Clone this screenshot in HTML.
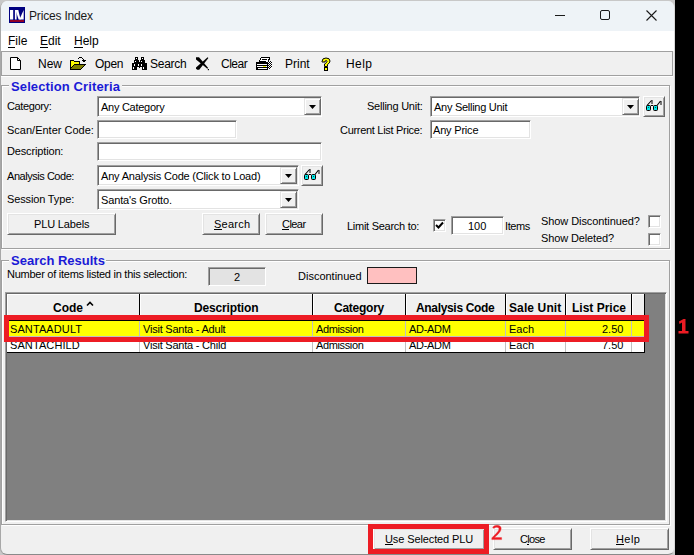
<!DOCTYPE html>
<html><head><meta charset="utf-8">
<style>
*{margin:0;padding:0;box-sizing:border-box}
html,body{width:694px;height:555px;overflow:hidden;background:#000}
body{position:relative;font-family:"Liberation Sans",sans-serif;font-size:11px;color:#000}
.a{position:absolute}
.t{position:absolute;white-space:nowrap;line-height:1;font-size:11px}
.s{position:absolute;white-space:nowrap;line-height:1;font-size:12px;color:#000}
.sunk{position:absolute;background:#fff;border-style:solid;border-width:1px;border-color:#a0a0a0 #fff #fff #a0a0a0;box-shadow:inset 1px 1px 0 #696969,inset -1px -1px 0 #e3e3e3}
.btn{position:absolute;background:#f0f0f0;border-style:solid;border-width:1px;border-color:#fff #696969 #696969 #fff;box-shadow:inset 1px 1px 0 #e3e3e3,inset -1px -1px 0 #a0a0a0}
.dd{position:absolute;width:17px;background:#f0f0f0;border-style:solid;border-width:1px;border-color:#e3e3e3 #696969 #696969 #e3e3e3;box-shadow:inset 1px 1px 0 #fff,inset -1px -1px 0 #a0a0a0}
.dd:after{content:"";position:absolute;left:4px;top:6px;width:7px;height:4px;background:#000;clip-path:polygon(0 0,100% 0,50% 100%)}
.gt{position:absolute;font-weight:bold;color:#1a1ad6;font-size:13px;line-height:1;white-space:nowrap}
.hl{position:absolute;height:1px;background:#a0a0a0;box-shadow:0 1px 0 #fff}
.vl{position:absolute;width:1px;background:#a0a0a0;box-shadow:1px 0 0 #fff}
u{text-decoration:none;position:relative}
u:after{content:"";position:absolute;left:0;right:0;bottom:0;height:1px;background:#000}
.hdr{position:absolute;top:294px;height:27px;background:#f0f0f0;border-right:1px solid #000;border-bottom:1px solid #000;box-shadow:inset 1px 1px 0 #fff}
.ht{position:absolute;top:302px;font-weight:bold;font-size:12px;line-height:1;white-space:nowrap}
.vg{position:absolute;width:1px;background:#c0c0c0}
.red{position:absolute;border:5px solid #ed1c24}
</style></head><body>
<!-- desktop behind -->
<div class="a" style="left:0;top:0;width:675px;height:555px;background:#c8c8c8"></div>
<!-- window -->
<div class="a" style="left:0;top:1px;width:675px;height:554px;background:#f0f0f0;border-radius:7px;overflow:hidden;border-left:1px solid #a8a8a8;border-right:1px solid #d8d8d8;border-bottom:1px solid #8a8a8a">
  <div class="a" style="left:0;top:0;width:675px;height:30px;background:#eef3f7"></div>
  <div class="a" style="left:0;top:30px;width:675px;height:20px;background:#fff"></div>
</div>

<!-- title bar -->
<svg class="a" style="left:9px;top:7px" width="16" height="16" viewBox="0 0 16 16">
  <rect width="16" height="16" fill="#000080"/>
  <rect x="1" y="3" width="3.2" height="9.5" fill="#fff"/>
  <path d="M5.9 3H7.6V12.5H5.9Z" fill="#fff"/>
  <path d="M6.5 3H9.3L11.6 12.5H9.6Z" fill="#fff"/>
  <path d="M14.7 3V12.5H10.4Z" fill="#fff"/>
  <rect x="1" y="13" width="14" height="2" fill="#900028"/>
</svg>
<div class="s" style="left:29px;top:10px;color:#1a1a1a;letter-spacing:-0.18px">Prices Index</div>
<div class="a" style="left:555px;top:15px;width:10px;height:1px;background:#1a1a1a"></div>
<div class="a" style="left:600px;top:10px;width:10px;height:10px;border:1px solid #1a1a1a;border-radius:2px"></div>
<svg class="a" style="left:645px;top:9px" width="13" height="13"><path d="M1.5 1.5L11.5 11.5M11.5 1.5L1.5 11.5" stroke="#1a1a1a" stroke-width="1.1"/></svg>

<!-- menu -->
<div class="s" style="left:8px;top:35px"><u>F</u>ile</div>
<div class="s" style="left:40px;top:35px"><u>E</u>dit</div>
<div class="s" style="left:74px;top:35px"><u>H</u>elp</div>

<!-- toolbar -->
<div class="a" style="left:1px;top:51px;width:672px;height:25px;border:1px solid #a0a0a0;background:#f0f0f0;box-shadow:0 1px 0 #fff"></div>
<svg class="a" style="left:10px;top:57px" width="12" height="14"><path d="M0.5 0.5H7.5L10.5 3.5V12.5H0.5Z" fill="#fff" stroke="#000"/><path d="M7.5 0.5V3.5H10.5" fill="none" stroke="#000"/></svg>
<div class="s" style="left:38px;top:58px">New</div>
<svg class="a" style="left:66px;top:54px" width="24" height="20" viewBox="0 0 24 20" shape-rendering="crispEdges">
  <path d="M5 7H14V10H9L5 14Z" fill="#ffff00"/>
  <path d="M5 6H8V7H14V10H13V8H8V7H5Z" fill="#000"/>
  <path d="M4 6H5V16H4Z" fill="#000"/>
  <path d="M5 14L9 11H19L15 15H5Z" fill="#808000"/>
  <path d="M8 10H20V11H19L15 15V16H4V15H14L18 11H9L5 14V13Z" fill="#000"/>
  <path d="M13 3H16V4H13ZM12 4H13V5H12ZM16 4H17V5H16ZM17 5H18V6H17ZM16 6H20V7H19V8H17V7H16Z" fill="#000"/>
</svg>
<div class="s" style="left:95px;top:58px;letter-spacing:-0.3px">Open</div>
<svg class="a" style="left:132px;top:57px" width="15" height="13" viewBox="0 0 15 13">
  <path d="M3 0H6V3H7V5H8V3H9V0H12V3H13V6H15V13H10V10H5V13H0V6H2V3H3Z" fill="#000"/><rect x="7" y="10" width="1" height="1" fill="#000"/>
  <rect x="4" y="1" width="1" height="1" fill="#fff"/><rect x="10" y="1" width="1" height="1" fill="#fff"/>
  <rect x="3" y="4" width="1" height="1" fill="#fff"/><rect x="9" y="4" width="1" height="1" fill="#fff"/>
  <rect x="2" y="7" width="1" height="2" fill="#fff"/><rect x="6" y="7" width="1" height="2" fill="#fff"/><rect x="9" y="7" width="1" height="2" fill="#fff"/>
  <rect x="1" y="10" width="1" height="2" fill="#fff"/><rect x="11" y="10" width="1" height="2" fill="#fff"/>
</svg>
<div class="s" style="left:150px;top:58px;letter-spacing:-0.25px">Search</div>
<svg class="a" style="left:196px;top:57px" width="14" height="14" viewBox="0 0 14 14">
  <path d="M0 0.3H3L12.2 11L11.3 11.8L0 2.6Z" fill="#000"/><path d="M0 10.6L11.6 0.2L12.4 1L3.2 12.8H1.2L0 11.8Z" fill="#000"/><rect x="11.8" y="12" width="1.2" height="1.2" fill="#000"/>
</svg>
<div class="s" style="left:221px;top:58px;letter-spacing:-0.5px">Clear</div>
<svg class="a" style="left:255px;top:56px" width="18" height="15" viewBox="0 0 18 15" shape-rendering="crispEdges">
  <rect x="6" y="1" width="9" height="1" fill="#000"/>
  <rect x="5" y="2" width="10" height="2" fill="#000"/><rect x="4" y="4" width="10" height="2" fill="#000"/>
  <rect x="6" y="2" width="8" height="1" fill="#fff"/><rect x="6" y="3" width="1" height="1" fill="#fff"/><rect x="12" y="3" width="1" height="1" fill="#fff"/>
  <rect x="5" y="4" width="8" height="1" fill="#fff"/><rect x="11" y="5" width="2" height="1" fill="#fff"/>
  <rect x="1" y="6" width="12" height="8" fill="#000"/>
  <rect x="2" y="8" width="10" height="1" fill="#fff"/>
  <rect x="2" y="10" width="10" height="1" fill="#fff"/>
  <rect x="8" y="10" width="3" height="1" fill="#ffff00"/>
  <rect x="3" y="12" width="9" height="1" fill="#fff"/>
  <rect x="13" y="5" width="4" height="8" fill="#fff"/><rect x="13" y="5" width="1" height="1" fill="#000"/><rect x="15" y="5" width="1" height="1" fill="#000"/><rect x="14" y="6" width="1" height="1" fill="#000"/><rect x="16" y="6" width="1" height="1" fill="#000"/><rect x="13" y="7" width="1" height="1" fill="#000"/><rect x="15" y="7" width="1" height="1" fill="#000"/><rect x="14" y="8" width="1" height="1" fill="#000"/><rect x="16" y="8" width="1" height="1" fill="#000"/><rect x="13" y="9" width="1" height="1" fill="#000"/><rect x="15" y="9" width="1" height="1" fill="#000"/><rect x="14" y="10" width="1" height="1" fill="#000"/><rect x="16" y="10" width="1" height="1" fill="#000"/><rect x="13" y="11" width="1" height="1" fill="#000"/><rect x="15" y="11" width="1" height="1" fill="#000"/><rect x="14" y="12" width="1" height="1" fill="#000"/>
</svg>
<div class="s" style="left:285px;top:58px">Print</div>
<svg class="a" style="left:320px;top:57px" width="12" height="14" viewBox="0 0 12 14">
  <path d="M2 4.5Q2 1 6 1Q10 1 10 4Q10 6 7.5 7.5V9.5H4.5V7Q7 5.5 7 4.5Q7 3.5 6 3.5Q5 3.5 5 5H2Z" fill="#ffff00" stroke="#000"/>
  <rect x="4.5" y="10.5" width="3" height="3" fill="#ffff00" stroke="#000"/>
</svg>
<div class="s" style="left:346px;top:58px;letter-spacing:0.4px">Help</div>

<!-- Selection Criteria group -->
<div class="a" style="left:1px;top:85px;width:669px;height:164px;border:1px solid #a0a0a0;box-shadow:inset 1px 1px 0 #fff,1px 1px 0 #fff"></div>
<div class="a" style="left:9px;top:80px;width:113px;height:12px;background:#f0f0f0"></div>
<div class="gt" style="left:11px;top:80px;letter-spacing:0.12px">Selection Criteria</div>

<div class="t" style="left:7px;top:101px;letter-spacing:-0.37px">Category:</div>
<div class="sunk" style="left:97px;top:96px;width:225px;height:21px"></div>
<div class="t" style="left:101px;top:102px;letter-spacing:-0.27px">Any Category</div>
<div class="dd" style="left:304px;top:98px;height:17px"></div>

<div class="t" style="left:7px;top:125px">Scan/Enter Code:</div>
<div class="sunk" style="left:97px;top:120px;width:140px;height:19px"></div>

<div class="t" style="left:7px;top:146px;letter-spacing:-0.15px">Description:</div>
<div class="sunk" style="left:97px;top:142px;width:225px;height:19px"></div>

<div class="t" style="left:7px;top:171px;letter-spacing:-0.46px">Analysis Code:</div>
<div class="sunk" style="left:97px;top:165px;width:202px;height:21px"></div>
<div class="t" style="left:101px;top:171px;letter-spacing:-0.19px">Any Analysis Code (Click to Load)</div>
<div class="dd" style="left:280px;top:167px;height:17px"></div>
<div class="btn" style="left:301px;top:165px;width:22px;height:21px"></div>
<svg class="a" style="left:303px;top:168px" width="18" height="13" viewBox="0 0 18 13">
  <rect x="1" y="6" width="5" height="6" rx="2" fill="#000"/><rect x="8" y="6" width="5" height="6" rx="2" fill="#000"/>
  <rect x="2" y="7" width="3" height="4" fill="#00e8e8"/><rect x="9" y="7" width="3" height="4" fill="#00e8e8"/>
  <rect x="3" y="8" width="1" height="1" fill="#0a6060"/><rect x="10" y="8" width="1" height="1" fill="#0a6060"/>
  <rect x="6" y="6" width="2" height="1" fill="#000"/>
  <path d="M2 6.5L6.5 1.5M12 6.5L15.5 2" stroke="#000" stroke-width="1.1"/>
  <rect x="6.5" y="1" width="1" height="4" fill="#000"/><rect x="15.5" y="2" width="1" height="4" fill="#000"/>
</svg>

<div class="t" style="left:7px;top:194px;letter-spacing:-0.14px">Session Type:</div>
<div class="sunk" style="left:97px;top:189px;width:202px;height:21px"></div>
<div class="t" style="left:101px;top:195px;letter-spacing:-0.14px">Santa's Grotto.</div>
<div class="dd" style="left:280px;top:191px;height:17px"></div>

<div class="btn" style="left:7px;top:213px;width:109px;height:22px"></div>
<div class="t" style="left:34px;top:219px;letter-spacing:-0.15px">PLU Labels</div>
<div class="btn" style="left:202px;top:213px;width:58px;height:22px"></div>
<div class="t" style="left:214px;top:219px;letter-spacing:0.26px"><u>S</u>earch</div>
<div class="btn" style="left:265px;top:213px;width:58px;height:22px"></div>
<div class="t" style="left:282px;top:219px;letter-spacing:-0.55px"><u>C</u>lear</div>

<div class="t" style="left:367px;top:101px;letter-spacing:-0.24px">Selling Unit:</div>
<div class="sunk" style="left:430px;top:96px;width:210px;height:21px"></div>
<div class="t" style="left:434px;top:102px;letter-spacing:-0.27px">Any Selling Unit</div>
<div class="dd" style="left:622px;top:98px;height:17px"></div>
<div class="btn" style="left:643px;top:96px;width:22px;height:21px"></div>
<svg class="a" style="left:645px;top:99px" width="18" height="13" viewBox="0 0 18 13">
  <rect x="1" y="6" width="5" height="6" rx="2" fill="#000"/><rect x="8" y="6" width="5" height="6" rx="2" fill="#000"/>
  <rect x="2" y="7" width="3" height="4" fill="#00e8e8"/><rect x="9" y="7" width="3" height="4" fill="#00e8e8"/>
  <rect x="3" y="8" width="1" height="1" fill="#0a6060"/><rect x="10" y="8" width="1" height="1" fill="#0a6060"/>
  <rect x="6" y="6" width="2" height="1" fill="#000"/>
  <path d="M2 6.5L6.5 1.5M12 6.5L15.5 2" stroke="#000" stroke-width="1.1"/>
  <rect x="6.5" y="1" width="1" height="4" fill="#000"/><rect x="15.5" y="2" width="1" height="4" fill="#000"/>
</svg>
<div class="t" style="left:340px;top:125px;letter-spacing:-0.3px">Current List Price:</div>
<div class="sunk" style="left:430px;top:120px;width:101px;height:19px"></div>
<div class="t" style="left:433px;top:125px;letter-spacing:-0.19px">Any Price</div>

<div class="t" style="left:347px;top:221px;letter-spacing:-0.27px">Limit Search to:</div>
<div class="sunk" style="left:433px;top:219px;width:13px;height:13px"></div>
<svg class="a" style="left:435px;top:221px" width="9" height="9"><path d="M1 4L3.5 6.5L8 1.5" fill="none" stroke="#000" stroke-width="2"/></svg>
<div class="sunk" style="left:451px;top:216px;width:53px;height:19px"></div>
<div class="t" style="left:468px;top:221px">100</div>
<div class="t" style="left:505px;top:221px;letter-spacing:-0.4px">Items</div>
<div class="t" style="left:541px;top:216px;letter-spacing:-0.08px">Show Discontinued?</div>
<div class="sunk" style="left:648px;top:215px;width:13px;height:13px"></div>
<div class="t" style="left:541px;top:233px;letter-spacing:-0.12px">Show Deleted?</div>
<div class="sunk" style="left:648px;top:233px;width:13px;height:13px"></div>

<!-- Search Results group -->
<div class="a" style="left:1px;top:260px;width:669px;height:265px;border:1px solid #a0a0a0;box-shadow:inset 1px 1px 0 #fff,1px 1px 0 #fff"></div>
<div class="a" style="left:9px;top:254px;width:97px;height:12px;background:#f0f0f0"></div>
<div class="gt" style="left:11px;top:254px">Search Results</div>
<div class="t" style="left:7px;top:269px;letter-spacing:-0.26px">Number of items listed in this selection:</div>
<div class="a" style="left:208px;top:267px;width:58px;height:19px;background:#e3e3e3;border-style:solid;border-width:1px;border-color:#a0a0a0 #fff #fff #a0a0a0;box-shadow:inset 1px 1px 0 #696969"></div>
<div class="t" style="left:234px;top:272px">2</div>
<div class="t" style="left:298px;top:271px">Discontinued</div>
<div class="a" style="left:367px;top:267px;width:50px;height:17px;background:#ffc0c0;border:1px solid #1a1a1a"></div>

<!-- grid -->
<div class="a" style="left:5px;top:292px;width:662px;height:230px;background:#808080;border-style:solid;border-width:1px;border-color:#a0a0a0 #fff #fff #a0a0a0;box-shadow:inset 1px 1px 0 #696969,inset -1px -1px 0 #e3e3e3"></div>
<div class="a" style="left:7px;top:321px;width:638px;height:32px;background:#fff;border-right:1px solid #000;border-bottom:1px solid #000"></div>
<div class="a" style="left:7px;top:321px;width:637px;height:15px;background:#ff0"></div>
<div class="a" style="left:7px;top:336px;width:637px;height:1px;background:#c0c0c0"></div>
<div class="hdr" style="left:7px;width:133px"></div>
<div class="hdr" style="left:140px;width:173px"></div>
<div class="hdr" style="left:313px;width:93px"></div>
<div class="hdr" style="left:406px;width:100px"></div>
<div class="hdr" style="left:506px;width:60px"></div>
<div class="hdr" style="left:566px;width:66px"></div>
<div class="hdr" style="left:632px;width:13px"></div>
<div class="ht" style="left:53px">Code</div><svg class="a" style="left:86px;top:301px" width="8" height="6"><path d="M1 4.5L4 1.5L7 4.5" fill="none" stroke="#000" stroke-width="1.6"/></svg>
<div class="ht" style="left:194px;letter-spacing:-0.15px">Description</div>
<div class="ht" style="left:334px;letter-spacing:-0.25px">Category</div>
<div class="ht" style="left:416px;letter-spacing:-0.33px">Analysis Code</div>
<div class="ht" style="left:509px;letter-spacing:0.12px">Sale Unit</div>
<div class="ht" style="left:572px">List Price</div>
<div class="vg" style="left:139px;top:321px;height:31px"></div>
<div class="vg" style="left:312px;top:321px;height:31px"></div>
<div class="vg" style="left:405px;top:321px;height:31px"></div>
<div class="vg" style="left:505px;top:321px;height:31px"></div>
<div class="vg" style="left:565px;top:321px;height:31px"></div>
<div class="vg" style="left:631px;top:321px;height:31px"></div>
<div class="t" style="left:10px;top:324px;letter-spacing:0.1px">SANTAADULT</div>
<div class="t" style="left:143px;top:324px;letter-spacing:-0.22px">Visit Santa - Adult</div>
<div class="t" style="left:316px;top:324px;letter-spacing:-0.37px">Admission</div>
<div class="t" style="left:409px;top:324px;letter-spacing:-0.3px">AD-ADM</div>
<div class="t" style="left:509px;top:324px">Each</div>
<div class="t" style="left:602px;top:324px">2.50</div>
<div class="t" style="left:10px;top:340px;letter-spacing:0.1px">SANTACHILD</div>
<div class="t" style="left:143px;top:340px;letter-spacing:-0.22px">Visit Santa - Child</div>
<div class="t" style="left:316px;top:340px;letter-spacing:-0.37px">Admission</div>
<div class="t" style="left:409px;top:340px;letter-spacing:-0.3px">AD-ADM</div>
<div class="t" style="left:509px;top:340px">Each</div>
<div class="t" style="left:602px;top:340px">7.50</div>

<!-- bottom buttons -->
<div class="btn" style="left:373px;top:528px;width:112px;height:22px"></div>
<div class="t" style="left:385px;top:534px;letter-spacing:-0.11px"><u>U</u>se Selected PLU</div>
<div class="btn" style="left:493px;top:528px;width:79px;height:22px"></div>
<div class="t" style="left:520px;top:534px;letter-spacing:-0.67px">C<u>l</u>ose</div>
<div class="btn" style="left:590px;top:528px;width:79px;height:22px"></div>
<div class="t" style="left:616px;top:534px;letter-spacing:0.4px"><u>H</u>elp</div>

<!-- annotations -->
<div class="red" style="left:4px;top:315px;width:645px;height:27px"></div>
<div class="red" style="left:368px;top:524px;width:121px;height:30px"></div>
<div class="a" style="left:675px;top:0;width:19px;height:555px;background:#000"></div>
<svg class="a" style="left:676px;top:318px" width="14" height="16" viewBox="0 0 14 16"><path d="M3 3.5L7.5 1H9.5V13H12.5V15.5H2.5V13H6V4.5L3.5 6Z" fill="#ed1c24"/></svg>
<svg class="a" style="left:491px;top:524px" width="13" height="17" viewBox="0 0 13 17"><path d="M1.6 3.2Q3.2 1.2 6 1.2Q10.2 1.2 10.2 4.8Q10.2 7.2 7 10.2L3.4 13.6H10.6V15.6H0.8V13.9L5.4 9.3Q8 6.7 8 4.9Q8 3.2 5.9 3.2Q4 3.2 2.8 4.6Z" fill="#ed1c24" stroke="#ed1c24" stroke-width="0.35"/></svg>
</body></html>
